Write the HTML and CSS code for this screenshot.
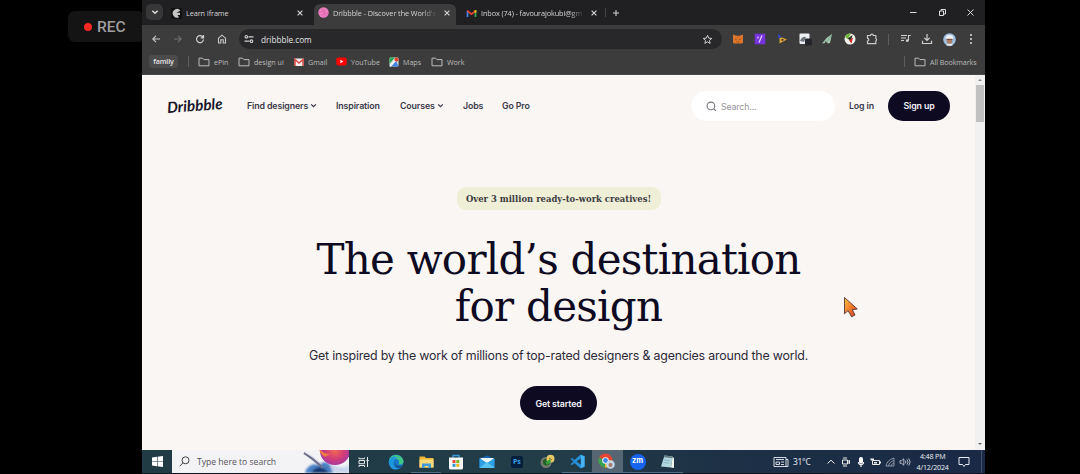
FILE: index.html
```html
<!DOCTYPE html>
<html lang="en">
<head>
<meta charset="utf-8">
<title>Dribbble - Discover the World's Top Designers</title>
<link rel="stylesheet" href="styles.css">
</head>
<body>
<svg class="defs" width="0" height="0" aria-hidden="true">
  <symbol id="close" viewBox="0 0 8 8"><path d="M1.6 1.6l4.8 4.8M6.4 1.6L1.6 6.4" fill="none" stroke="currentColor" stroke-width="1.1"/></symbol>
  <symbol id="folder" viewBox="0 0 12 10"><path d="M1 1.2h3.6l1.3 1.4H11v6.2H1z" fill="none" stroke="currentColor" stroke-width="1" stroke-linejoin="round"/></symbol>
  <symbol id="chev" viewBox="0 0 6 6"><path d="M1 2l2 2 2-2" fill="none" stroke="currentColor" stroke-width="1.1"/></symbol>
</svg>
<aside class="rail"><div class="rec"><i></i><span>REC</span></div></aside>
<div class="screen">
  <header class="chrome">
    <div class="tabs">
      <button class="tabsearch"><svg width="8" height="8"><use href="#chev"/></svg></button>
      <div class="tab tab-learn">
        <svg class="fav" width="11" height="11" viewBox="0 0 11 11"><rect width="11" height="11" rx="1" fill="#111"/><path d="M9.5 2.5A4.4 4.4 0 1 0 8 9.3L6.4 7H9V4.800H5.600" fill="#c4c4c4"/></svg>
        <span class="title">Learn Iframe</span>
        <svg class="x" width="8" height="8"><use href="#close"/></svg>
      </div>
      <div class="tab active">
        <svg class="fav" width="11" height="11" viewBox="0 0 11 11"><circle cx="5.500" cy="5.500" r="5.200" fill="#ee7fc1"/><path d="M3.500 1Q7 4.500 7.400 10M1 5.200Q6 5.200 9 2M3 9.500Q5 5.500 10.200 6.200" fill="none" stroke="#d05fa2" stroke-width=".7"/></svg>
        <span class="title">Dribbble - Discover the World's</span>
        <svg class="x" width="8" height="8"><use href="#close"/></svg>
      </div>
      <div class="tab tab-mail">
        <svg class="fav" width="11" height="11" viewBox="0 0 11 11"><path d="M1.500 9V3" stroke="#4285f4" stroke-width="1.800"/><path d="M9.500 9V3" stroke="#34a853" stroke-width="1.800"/><path d="M1.200 2.700l4.300 3.400 4.300-3.400" fill="none" stroke="#ea4335" stroke-width="1.700"/><path d="M8.600 2h1.800v2.300l-1.800 1z" fill="#fbbc04"/></svg>
        <span class="title">Inbox (74) - favourajokubi@gm</span>
        <svg class="x" width="8" height="8"><use href="#close"/></svg>
      </div>
      <i class="tabsep"></i>
      <svg class="plus" width="8" height="8" viewBox="0 0 8 8"><path d="M4 1v6M1 4h6" stroke="#d8d8d8"/></svg>
      <div class="winbtns">
        <svg width="9" height="9" viewBox="0 0 9 9"><path d="M1 4.500h6.500" stroke="#ddd"/></svg>
        <svg width="9" height="9" viewBox="0 0 9 9"><path d="M1.500 3h4v4.500h-4zM3 3V1.500h4.500V6h-2" fill="none" stroke="#ddd"/></svg>
        <svg width="9" height="9" viewBox="0 0 9 9"><path d="M1.500 1.500l6 6M7.500 1.500l-6 6" stroke="#ddd"/></svg>
      </div>
    </div>
    <div class="toolbar">
      <div class="nav">
        <svg width="10" height="10" viewBox="0 0 10 10"><path d="M9 5H1.800M5 1.800L1.800 5 5 8.200" fill="none" stroke="#c8c8c8" stroke-width="1.100"/></svg>
        <svg width="10" height="10" viewBox="0 0 10 10"><path d="M1 5h7.200M5 1.800L8.200 5 5 8.200" fill="none" stroke="#727272" stroke-width="1.100"/></svg>
        <svg width="10" height="10" viewBox="0 0 10 10"><path d="M8 3.300A3.500 3.500 0 1 0 8.500 5.500M8.500 1v2.800H5.700" fill="none" stroke="#cfcfcf" stroke-width="1.200"/></svg>
        <svg width="10" height="10" viewBox="0 0 10 10"><path d="M1.500 4.200L5 1.200l3.500 3V9H6.200V5.800H3.800V9H1.500z" fill="none" stroke="#c8c8c8" stroke-width="1.100"/></svg>
      </div>
      <div class="omnibox">
        <svg class="tune" width="10" height="10" viewBox="0 0 10 10"><path d="M4.500 2.800h5M.5 7.200h5" stroke="#d0d0d0" stroke-width="1.300"/><circle cx="2.300" cy="2.800" r="1.300" fill="none" stroke="#d0d0d0" stroke-width="1.100"/><circle cx="7.500" cy="7.200" r="1.300" fill="none" stroke="#d0d0d0" stroke-width="1.100"/></svg>
        <span class="url">dribbble.com</span>
        <svg width="11" height="11" viewBox="0 0 24 24"><path d="M12 3l2.700 6 6.500.700-4.900 4.300 1.400 6.500-5.700-3.300-5.700 3.300 1.400-6.500L2.800 9.700 9.300 9z" fill="none" stroke="#dcdcdc" stroke-width="2"/></svg>
      </div>
      <div class="exts">
        <svg width="12" height="12" viewBox="0 0 12 12"><path d="M1 1.500l3.500 1.300h3L11 1.500V10l-3 .7-2-.5-2 .5-3-.7z" fill="#dc762d"/><path d="M3 6l2 1M9 6L7 7M4.500 9h3" stroke="#a8561f"/></svg>
        <svg width="12" height="12" viewBox="0 0 12 12"><rect x=".7" y=".7" width="10.600" height="10.600" fill="#7534dc"/><path d="M8 2.500L5 9.500M4 3.500v2" stroke="#e5d4ff" stroke-width="1.200"/></svg>
        <svg width="12" height="12" viewBox="0 0 12 12"><path d="M1 1l4 2.500-4 2z" fill="#3648b8"/><path d="M2.500 5v5.500l7.500-4L5 4.500z" fill="#d9a136"/><path d="M4.500 6h2v1.700h-2z" fill="#3d3d3d"/></svg>
        <svg width="13" height="13" viewBox="0 0 13 13"><rect x=".5" y=".5" width="10" height="10.500" rx="1" fill="#eef1f4"/><path d="M1 8q2-5 6-4l-2 5z" fill="#6f7680"/><rect x="6" y="5.500" width="7" height="7" rx="1" fill="#24262b"/></svg>
        <svg width="12" height="12" viewBox="0 0 12 12"><path d="M11 1L5.500 5 1 10.500 4 10l.5-2L7 10.500l2-.5z" fill="#9fc7ae"/><path d="M10 2.500l-4 6" stroke="#6f9480" stroke-width=".7"/></svg>
        <svg width="12" height="12" viewBox="0 0 12 12"><circle cx="6" cy="6" r="5.500" fill="#f1f3ed"/><path d="M1 4A5.300 5.300 0 0 1 7 .7L3.500 6z" fill="#72b53b"/><path d="M3.500 5.500L8.500 2 7 8z" fill="#26351d"/><path d="M5 7.500l4-3-1.500 6z" fill="#ce2929"/></svg>
        <svg width="12" height="12" viewBox="0 0 12 12"><path d="M1.500 2.500h3a1.400 1.400 0 0 1 2.800 0h2.500v3a1.400 1.400 0 0 1 0 2.500v2.700H1.500V8a1.300 1.300 0 0 0 0-2.600z" fill="none" stroke="#c8c8c8" stroke-width="1.200"/></svg>
      </div>
      <i class="sep"></i>
      <div class="menu">
        <svg width="11" height="11" viewBox="0 0 11 11"><path d="M1 2.500h6M1 5h5M1 7.500h3M8.500 7.500v-5h2.200" fill="none" stroke="#d0d0d0" stroke-width="1.100"/><circle cx="7.300" cy="7.700" r="1.400" fill="#d0d0d0"/></svg>
        <svg width="12" height="12" viewBox="0 0 12 12"><path d="M6 1v6M3.300 4.800L6 7.500l2.700-2.700M1.500 7.800v2.700h9V7.800" fill="none" stroke="#d0d0d0" stroke-width="1.200"/></svg>
        <svg width="13" height="13" viewBox="0 0 13 13"><circle cx="6.500" cy="6.500" r="6.300" fill="#9ebfdf"/><ellipse cx="6.500" cy="4.600" rx="3.800" ry="2.600" fill="#f0f2f4"/><path d="M3.800 6h5.400v3.500l-2.700 2-2.700-2z" fill="#b17d67"/><path d="M3.500 5.800h6v1h-6z" fill="#66483f"/><path d="M3 12q3.500-2.500 7 0-3.500 1.700-7 0z" fill="#e9eef2"/></svg>
        <svg width="4" height="12" viewBox="0 0 4 12"><circle cx="2" cy="2" r="1" fill="#ddd"/><circle cx="2" cy="6" r="1" fill="#ddd"/><circle cx="2" cy="10" r="1" fill="#ddd"/></svg>
      </div>
    </div>
    <div class="bookmarks">
      <span class="family">family</span>
      <i class="sep"></i>
      <span class="bm b1"><svg width="12" height="10"><use href="#folder"/></svg>ePin</span>
      <span class="bm b2"><svg width="12" height="10"><use href="#folder"/></svg>design ui</span>
      <span class="bm b3"><svg width="10" height="10" viewBox="0 0 10 10"><rect x=".5" y="1.500" width="9" height="7.500" fill="#f4eeee"/><path d="M1 9V2.500L5 6l4-3.500V9" fill="none" stroke="#d94a40" stroke-width="1.500"/></svg>Gmail</span>
      <span class="bm b4"><svg width="11" height="9" viewBox="0 0 11 9"><rect x=".3" y=".6" width="10.400" height="7.800" rx="2" fill="#f00"/><path d="M4.400 2.800v3.400L7.200 4.500z" fill="#fff"/></svg>YouTube</span>
      <span class="bm b5"><svg width="10" height="10" viewBox="0 0 10 10"><rect x=".5" y=".5" width="9" height="9" rx="1" fill="#e5e7e4"/><path d="M.5.500H6L.5 7z" fill="#2da55d"/><path d="M.5 9.500L7 3l2.500 6.500z" fill="#4384e5"/><path d="M1 9.500L8 2" stroke="#f4f4f4" stroke-width="1.600"/><circle cx="7.500" cy="2.600" r="2.100" fill="#e34434"/></svg>Maps</span>
      <span class="bm b6"><svg width="12" height="10"><use href="#folder"/></svg>Work</span>
      <i class="sep last"></i>
      <span class="bm b7"><svg width="12" height="10"><use href="#folder"/></svg>All Bookmarks</span>
    </div>
  </header>

  <main class="viewport">
    <div class="site">
      <nav class="sitenav">
        <a class="logo">Dribbble</a>
        <a class="n1">Find designers<svg width="7" height="7"><use href="#chev"/></svg></a>
        <a class="n2">Inspiration</a>
        <a class="n3">Courses<svg width="7" height="7"><use href="#chev"/></svg></a>
        <a class="n4">Jobs</a>
        <a class="n5">Go Pro</a>
        <div class="search"><svg width="11" height="11" viewBox="0 0 11 11"><circle cx="4.900" cy="4.900" r="3.800" fill="none" stroke="#77747c" stroke-width="1.100"/><path d="M7.700 7.700l2.200 2.200" stroke="#77747c" stroke-width="1.200"/></svg><span>Search...</span></div>
        <a class="login">Log in</a>
        <a class="btn signup">Sign up</a>
      </nav>
      <section class="hero">
        <div class="pill">Over 3 million ready-to-work creatives!</div>
        <h1><span class="l1">The world’s destination</span><span class="l2">for design</span></h1>
        <p>Get inspired by the work of millions of top-rated designers &amp; agencies around the world.</p>
        <a class="btn start">Get started</a>
      </section>
    </div>
    <div class="scroll"><i class="up"></i><b></b><i class="down"></i></div>
    <svg class="cursor" width="16" height="24" viewBox="0 0 16 24"><defs><linearGradient id="cg" x1="0" y1="0" x2="1" y2="1"><stop offset="0" stop-color="#f7c545"/><stop offset=".5" stop-color="#f07c2c"/><stop offset="1" stop-color="#cf3526"/></linearGradient></defs><path d="M1.500 1.500v16.300l3.600-3.200 3.500 6.200 3.400-1.800-2.700-5.300 5-.7z" fill="url(#cg)" stroke="#55372c" stroke-width=".9" stroke-linejoin="round"/></svg>
  </main>

  <footer class="taskbar">
    <div class="win"><svg width="11" height="11" viewBox="0 0 11 11"><path d="M0 1.500L5 .8v4.400H0zM5.600.700L11 0v5.200H5.600zM0 5.800h5v4.400l-5-.7zM5.600 5.800H11V11l-5.400-.7z" fill="#fff"/></svg></div>
    <div class="tsearch">
      <svg width="11" height="11" viewBox="0 0 11 11"><circle cx="6.500" cy="4.300" r="3.500" fill="none" stroke="#444"/><path d="M4 6.800L.8 10.200" stroke="#444"/></svg>
      <span>Type here to search</span>
      <svg class="art" width="46" height="23" viewBox="0 0 46 23"><defs><radialGradient id="ball"><stop offset="0" stop-color="#ef6a55"/><stop offset=".6" stop-color="#d43c78"/><stop offset="1" stop-color="#a93a9c"/></radialGradient><filter id="soft"><feGaussianBlur stdDeviation="1.200"/></filter></defs><g filter="url(#soft)"><path d="M2 22Q7 12 15 15q8-6 13 1l8 7H3z" fill="#4a7fc4"/><path d="M8 23q6-9 14-4l4 4z" fill="#18396f"/><path d="M26 13q14 8 20 1v9H30z" fill="#c8d6ea"/></g><ellipse cx="32" cy="1" rx="15" ry="14" fill="url(#ball)"/><path d="M17-1q3 5 10 5l-5 3q-5-3-6-8z" fill="#ed7c42"/><path d="M1 3q7 4 19 15" fill="none" stroke="#6c6f8e" stroke-width="2.200"/><path d="M2 2.500q8 3 17 12" fill="none" stroke="#d8d6e4" stroke-width=".8"/></svg>
    </div>
    <div class="view"><svg width="12" height="12" viewBox="0 0 12 12"><path d="M1 1.500v1.200h5.500V1.500M1 4.500h5.500v3.200H1zM1 11V9.500h5.500V11M9.500 1v10M8.300 4.500h2.500" fill="none" stroke="#e5e9ea"/></svg></div>
    <div class="apps">
      <span><svg width="16" height="16" viewBox="0 0 16 16"><circle cx="8" cy="8" r="7.500" fill="#1878c8"/><path d="M1 7C2-1 14-1 15.500 7q.3 4-5 3.500 2-5-2.500-5.500-4 0-7 2z" fill="#42c685"/><path d="M1 6.500Q5 0 10 4 5 4 5.500 9.500 6 14 12 14 4 18 1.500 11z" fill="#1d98dd"/><path d="M6.500 8q0 5 8 3.500-2 3-5 2.500-4-2-3-6z" fill="#155093"/></svg></span>
      <span class="open"><svg width="15" height="14" viewBox="0 0 15 14"><path d="M.5 1.500h5L7 3h7.500v9.500H.5z" fill="#efb637"/><path d="M.5 4.500h14v8H.5z" fill="#fbda79"/><path d="M3 13V8.500h9V13h-2.500v-2h-4v2z" fill="#4099d5"/></svg></span>
      <span><svg width="16" height="16" viewBox="0 0 16 16"><path d="M5 4V1.500h6V4" fill="none" stroke="#3a9bdc" stroke-width="1.300"/><path d="M1 3.500h14V14q0 1.500-1.500 1.500h-11Q1 15.500 1 14z" fill="#f5f7f9"/><path d="M4.500 6h3v3h-3z" fill="#e85032"/><path d="M8.300 6h3v3h-3z" fill="#78b726"/><path d="M4.500 9.800h3v3h-3z" fill="#269bd7"/><path d="M8.300 9.800h3v3h-3z" fill="#efb41c"/></svg></span>
      <span><svg width="16" height="15" viewBox="0 0 16 15"><path d="M.5 5L8 1.500 15.500 5v9H.5z" fill="#1267b4"/><path d="M1.500 4h13v6h-13z" fill="#eef8fc"/><path d="M.5 4L8 9 15.500 4v10H.5z" fill="#2e9fe3"/><path d="M.5 14L8 8l7.500 6z" fill="#58c3f2"/></svg></span>
      <span><b class="ps">Ps</b></span>
      <span><svg width="15" height="15" viewBox="0 0 15 15"><circle cx="6" cy="8.500" r="5.500" fill="#737b70"/><circle cx="6.500" cy="8" r="3.500" fill="#275e27"/><circle cx="10.500" cy="4.800" r="4" fill="#e5c963"/><path d="M5.500 8.500L10 5l1 3-3.500 3z" fill="#36a436"/><path d="M9 4l3 2" stroke="#7c643b"/></svg></span>
      <span class="open"><svg width="15" height="15" viewBox="0 0 15 15"><path d="M10.500.500l4 1.800v10.400l-4 1.800L4.500 9 2 11 .5 10.200l3-2.700-3-2.700L2 4l2.500 2z" fill="#2491da"/><path d="M10.700 4.500v6L6.500 7.500z" fill="#223b47"/><path d="M11 1l3.500 1.300v10.400L11 14z" fill="#46b3f4"/></svg></span>
      <span class="current open"><svg width="18" height="17" viewBox="0 0 18 17"><circle cx="7.500" cy="7.500" r="7" fill="#e64435"/><path d="M7.500 7.500L1 4.500a7 7 0 0 0 6 10z" fill="#34a153"/><path d="M7.500 7.500h7a7 7 0 0 1-7.500 7z" fill="#f4c52d"/><circle cx="7.500" cy="7.500" r="3.300" fill="#f8f8f8"/><circle cx="7.500" cy="7.500" r="2.400" fill="#4285e8"/><circle cx="12.500" cy="11.500" r="4.300" fill="#c1d6e9"/><circle cx="12.500" cy="12" r="2" fill="#a5786b"/></svg></span>
      <span class="open"><b class="zm">zm</b></span>
      <span class="open"><svg width="15" height="15" viewBox="0 0 15 15"><path d="M4.500 1.500l8 1-1.500 11-10-1z" fill="#b3d9df"/><path d="M4.500 1.500l8 1-.3 1.800-8.300-1z" fill="#687e82"/><path d="M12.500 3l1.500 1v10l-3-.5z" fill="#eef5ee"/><path d="M4 6l6 .7M3.500 8.500l6 .7" stroke="#77a6b6" stroke-width=".7"/></svg></span>
    </div>
    <div class="weather"><svg width="16" height="12" viewBox="0 0 16 12"><path d="M1 1.500h12v9H1zM13 3.500h2v7h-2M3 3.500h8M3 6h3.500v2.500H3zM8 6h3M8 8.500h3" fill="none" stroke="#e8eaf0" stroke-width=".9"/></svg><span>31°C</span></div>
    <div class="tray">
      <svg width="10" height="10" viewBox="0 0 10 10"><path d="M1.500 6.500L5 3.200l3.500 3.300" fill="none" stroke="#eee"/></svg>
      <svg width="10" height="10" viewBox="0 0 10 10"><path d="M1.500 3h5v4h-5zM6.500 4.500l2-1v3l-2-1M2 1h4M2 9h4" fill="none" stroke="#eee"/></svg>
      <svg width="10" height="12" viewBox="0 0 10 12"><rect x="3" y="1" width="4" height="6.500" rx="2" fill="#fff"/><path d="M2.500 6q0 2.500 2.500 2.500T7.500 6M5 8.500V11" fill="none" stroke="#eee" stroke-width="1.300"/></svg>
      <svg width="11" height="10" viewBox="0 0 11 10"><path d="M2.500 3.500h7v4h-7z" fill="none" stroke="#eee"/><path d="M4 5h3v1.500H4zM0 1.500h4v2H1zM9.500 4.500H11v2H9.500z" fill="#eee"/></svg>
      <svg width="10" height="10" viewBox="0 0 10 10"><path d="M1 9Q2 3 9 1M3.500 9Q4 5 9 3.500M6 9q0-2 3-3M9 1v8H1" fill="none" stroke="#969dac" stroke-width=".9"/></svg>
      <svg width="12" height="10" viewBox="0 0 12 10"><path d="M1 3.700h1.600L4.800 1.800v6.400L2.600 6.300H1zM6.300 3.500q1.200 1.500 0 3M8 2.400q2.200 2.600 0 5.200M9.700 1.400q3 3.600 0 7.200" fill="none" stroke="#d5d8df" stroke-width=".8"/></svg>
    </div>
    <div class="clock"><span>4:48 PM</span><span>4/12/2024</span></div>
    <div class="notice"><svg width="12" height="12" viewBox="0 0 12 12"><path d="M1 1.500h10v7H7.500L6 10.500 4.500 8.500H1z" fill="none" stroke="#e8eaf0"/></svg></div>
  </footer>
</div>
</body>
</html>
```
FILE: styles.css
```css
* { box-sizing: border-box; }
body {
  margin: 0;
  width: 1080px;
  height: 474px;
  overflow: hidden;
  background: #000;
  display: flex;
  font-family: "Open Sans", "Noto Sans", sans-serif;
}
svg { display: block; flex: none; }
span, a { white-space: nowrap; }
.defs { position: absolute; }

/* recording badge */
.rail { width: 142px; flex: none; padding: 11px 0 0 68px; }
.rec {
  height: 31px;
  background: #141414;
  border-radius: 7px 4px 4px 7px;
  display: flex;
  align-items: center;
  padding-left: 16px;
  gap: 5px;
  color: #a09f9f;
  font: 500 15.5px Roboto, sans-serif;
}
.rec i { width: 8px; height: 8px; border-radius: 50%; background: #ef2b22; }

.screen { width: 843px; height: 474px; display: flex; flex-direction: column; }

/* browser frame */
.chrome { background: #3c3c3c; color: #d6d6d6; font-size: 7.3px; }
.tabs { height: 25px; background: #202022; display: flex; align-items: flex-end; }
.tabsearch {
  width: 17px; height: 16px; margin: 0 0 5px 4px; padding: 0;
  border: 0; border-radius: 5px; background: #373738; color: #ddd;
  display: grid; place-items: center;
}
.tab { height: 20px; display: flex; align-items: center; padding-bottom: 4px; }
.tab .title { overflow: hidden; margin-left: 4px; }
.tab .x { margin-left: auto; color: #d8d8d8; }
.tab-learn { width: 133px; margin-left: 8px; }
.tab-learn .title { letter-spacing: -.1px; }
.active {
  width: 142px; height: 21px; margin-left: 10px; padding: 0 5px 4px 4px;
  background: #3c3c3c; border-radius: 6px 6px 0 0;
}
.active .title, .tab-mail .title {
  width: 104px;
  mask-image: linear-gradient(90deg, #000 85%, transparent);
}
.active .title { letter-spacing: -.08px; }
.tab-mail .title { letter-spacing: -.1px; }
.tab-mail { width: 132px; margin-left: 10px; }
.tabsep { width: 1px; height: 9px; margin: 0 0 8px 7px; background: #454547; }
.plus { margin: 0 0 8px 6px; }
.winbtns { margin: 0 10px 8px auto; display: flex; gap: 19.5px; }
.toolbar { height: 27px; display: flex; align-items: center; padding-top: 1px; }
.nav { display: flex; gap: 12px; margin-left: 9px; }
.omnibox {
  width: 483px; height: 20px; margin-left: 12px; padding: 0 9px 0 5px;
  border-radius: 10px; background: #28282a;
  display: flex; align-items: center; font-size: 8.2px; color: #e4e4e4;
}
.url { margin: 0 auto 0 7px; }
.exts { display: grid; grid-template-columns: repeat(7, 22.3px); justify-items: center; margin-left: 5px; }
.sep { width: 1px; height: 11px; background: #5e5e5e; flex: none; }
.exts + .sep { margin-left: 5px; }
.menu { display: grid; grid-template-columns: repeat(4, 22px); justify-items: center; margin-left: 5px; }
.bookmarks { height: 23px; display: flex; align-items: center; padding-bottom: 3px; border-bottom: 1px solid #4a4a4a; font-size: 7.1px; color: #bcbcbc; }
.family { margin: 0 10px 0 7px; width: 29px; height: 13px; line-height: 13px; text-align: center; border-radius: 3px; background: #4b4b4c; color: #e6e6e6; font-weight: 600; letter-spacing: -.1px; }
.bm { display: flex; align-items: center; gap: 4px; flex: none; }
.b1 { margin-left: 9px; width: 40px; }
.b2 { width: 56px; }
.b3 { width: 42px; }
.b4 { width: 53px; letter-spacing: -.05px; }
.b5 { width: 42px; }
.b6 { width: 38px; }
.last { margin-left: auto; }
.b7 { margin: 0 9px 0 9px; width: 62px; letter-spacing: -.05px; }

/* page */
.viewport { height: 375px; position: relative; display: flex; background: #faf6f3; }
.site { width: 833px; color: #0d0c22; font-family: Inter, "Liberation Sans", sans-serif; }
.sitenav { display: flex; align-items: center; height: 30px; margin-top: 16px; padding-left: 25px; font-size: 8.8px; font-weight: 600; color: #3b394a; }
.sitenav a { flex: none; padding-bottom: 1px; letter-spacing: -.12px; }
.sitenav svg { margin-left: 2px; }
.sitenav .logo { width: 80px; font: italic 700 15.2px Lato, sans-serif; color: #17142a; transform: rotate(-4deg); transform-origin: 28px 50%; letter-spacing: .05px; padding-bottom: 3px; }
.n1, .n3 { display: flex; align-items: center; }
.n1 { width: 89px; }
.n2 { width: 64px; }
.n3 { width: 63px; }
.n4 { width: 39px; }
.search { width: 144px; height: 30px; margin-left: 151px; border-radius: 15px; background: #fff; display: flex; align-items: center; padding-left: 13px; color: #98959c; font-weight: 400; gap: 4px; letter-spacing: -.15px; }
.n5 { width: 38px; }
.login { margin-left: 14px; width: 39px; }
.btn { background: #0d0a22; color: #f5f3f8; font-weight: 600; display: grid; place-items: center; border-radius: 18px; letter-spacing: -.12px; }
.sitenav .signup { width: 62px; height: 30px; }
.hero { display: flex; flex-direction: column; align-items: center; padding-top: 66px; }
.pill { width: 204px; height: 23px; border-radius: 9px; background: #efefd7; text-align: center; color: #3d3c40; font: 700 9.4px/23px "DejaVu Serif Condensed", "DejaVu Serif", serif; white-space: nowrap; }
h1 { margin: 26px 0 0; font: 400 42px/47px "DejaVu Serif", serif; text-align: center; white-space: nowrap; color: #0d0a22; letter-spacing: -.75px; }
h1 span { display: block; height: 47px; }
p { margin: 17px 0 0; font-size: 12.4px; line-height: 17px; color: #2c2a38; white-space: nowrap; letter-spacing: -.19px; }
.start { width: 77px; height: 34px; margin-top: 22px; font-size: 8.8px; }
.scroll { width: 10px; background: #f2f1f1; display: flex; flex-direction: column; align-items: center; }
.scroll b { width: 8px; height: 37px; background: #c1c1c1; margin-top: 4px; }
.scroll i { border: 2px solid transparent; }
.up { border-bottom-color: #888 !important; margin-top: 2px; }
.down { border-top-color: #666 !important; margin: auto 0 3px; }
.cursor { position: absolute; left: 701px; top: 221px; }

/* desktop taskbar */
.taskbar { height: 24px; border-bottom: 1px solid #101722; display: flex; color: #edf0f5; background: linear-gradient(90deg, #213b45, #223c48 50%, #1d3046 70%, #1a2946); }
.taskbar > div { flex: none; display: flex; align-items: center; }
.win { width: 30px; justify-content: center; }
.tsearch { width: 177px; background: #f3f2f5; color: #55545a; font-size: 8.6px; padding-left: 7px; gap: 7px; overflow: hidden; }
.art { margin-left: auto; }
.view { width: 32px; padding-left: 9px; }
.apps span { width: 30.2px; height: 23px; display: grid; place-items: center; }
.apps .open { box-shadow: inset 0 -1px #4d7188; }
.apps .current { background: #566773; }
.ps { width: 12px; height: 12px; background: #061f3c; color: #38a3ec; font-size: 7px; line-height: 12px; text-align: center; border-radius: 2px; }
.zm { width: 16px; height: 16px; border-radius: 50%; background: #1765ef; color: #fff; font: 700 7.5px/14px Inter, sans-serif; text-align: center; }
.weather { margin-left: 90px; gap: 4px; font-size: 8.4px; width: 48px; letter-spacing: -.2px; }
.tray { display: grid !important; grid-template-columns: repeat(6, 14.8px); justify-items: center; margin-left: 3px; }
.taskbar .clock { width: 36px; margin-left: 2px; flex-direction: column; justify-content: center; font-size: 7.1px; line-height: 11px; letter-spacing: -.15px; }
.notice { margin-left: 7px; width: 24px; border-right: 1px solid #42506a; }
```
